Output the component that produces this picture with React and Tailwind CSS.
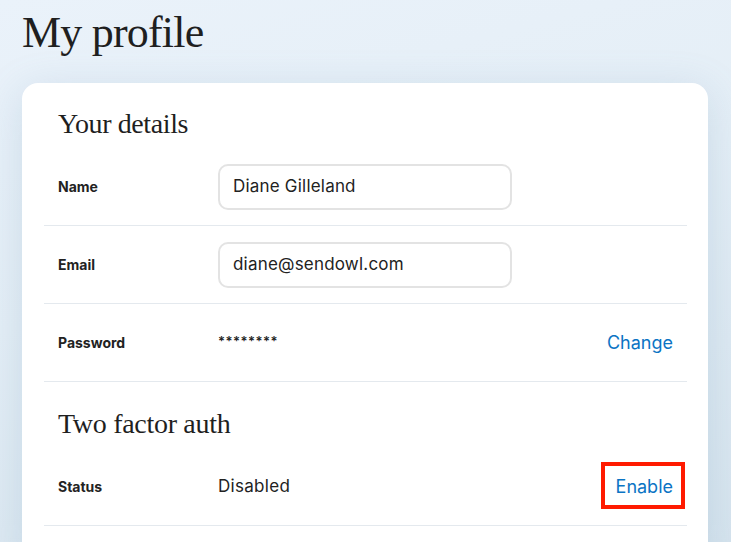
import React from "react";

const serif = { fontFamily: '"Liberation Serif", "DejaVu Serif", serif' };

function Row({ label, children, right }) {
  return (
    <div className="flex h-[78px] items-center border-b border-[#e4e9ee] pl-[14px] pr-[14px]">
      <div className="w-[160px] shrink-0 text-[14px] font-bold text-[#222]">{label}</div>
      <div className="flex-1">{children}</div>
      {right}
    </div>
  );
}

function Input({ value }) {
  return (
    <div className="flex h-[46px] w-[294px] items-center rounded-[10px] border-2 border-[#e3e3e3] pl-[13px] text-[17px] tracking-[0.2px] text-[#222]">
      {value}
    </div>
  );
}

export default function App() {
  return (
    <div
      className="h-[542px] w-full overflow-hidden bg-[linear-gradient(165deg,#eaf2fa_0%,#e4eef6_45%,#d6e4ee_100%)] pl-[22px] pr-[23px]"
      style={{ fontFamily: 'Inter, "Noto Sans", sans-serif' }}
    >
      <h1
        className="pt-[7px] text-[44px] leading-[52px] tracking-[-0.8px] text-[#1f1f1f]"
        style={serif}
      >
        My profile
      </h1>
      <div className="mt-[24px] rounded-[16px] bg-white pl-[22px] pr-[21px] pt-[25px] shadow-[0_8px_40px_rgba(110,150,180,0.22)]">
        <h2 className="mb-2 pl-[14px] text-[28px] leading-[32px] tracking-[-0.4px] text-[#1f1f1f]" style={serif}>
          Your details
        </h2>
        <Row label="Name">
          <Input value="Diane Gilleland" />
        </Row>
        <Row label="Email">
          <Input value="diane@sendowl.com" />
        </Row>
        <Row
          label="Password"
          right={<span className="text-[18px] text-[#0b74c4]">Change</span>}
        >
          <span className="relative -top-[3px] text-[13px] font-semibold tracking-[0.5px] text-[#222]">********</span>
        </Row>
        <h2 className="mb-2 mt-[26px] pl-[14px] text-[28px] leading-[32px] tracking-[-0.3px] text-[#1f1f1f]" style={serif}>
          Two factor auth
        </h2>
        <Row
          label="Status"
          right={
            <span className="relative text-[18px] leading-[24px] text-[#0b74c4]">
              Enable
              <span className="absolute -bottom-[10px] -left-[15px] -right-[12px] -top-[13px] border-[4px] border-[#ff1a00]" />
            </span>
          }
        >
          <span className="text-[17px] tracking-[0.3px] text-[#222]">Disabled</span>
        </Row>
        <div className="h-[40px]" />
      </div>
    </div>
  );
}
